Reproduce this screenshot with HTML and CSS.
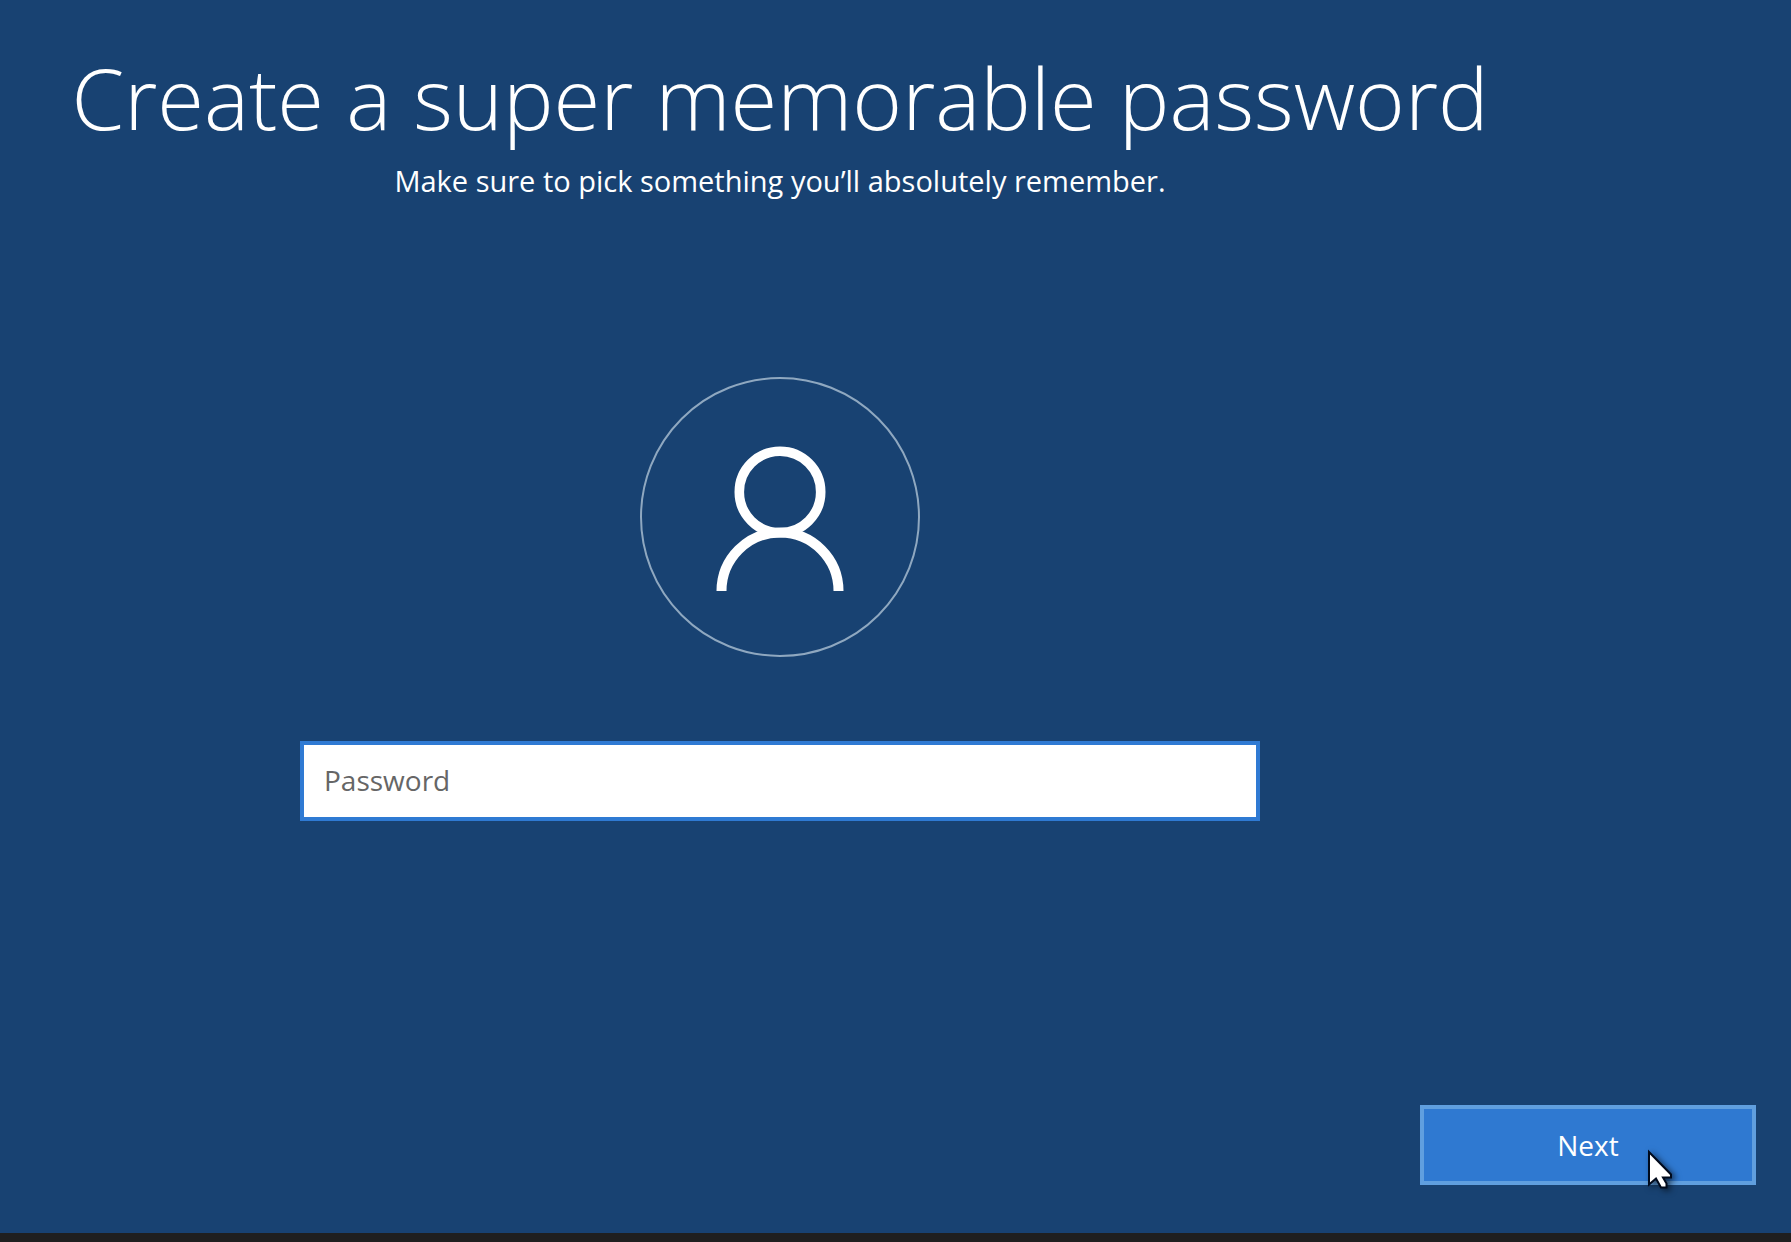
FILE: index.html
```html
<!DOCTYPE html>
<html lang="en">
<head>
<meta charset="utf-8">
<title>Create a super memorable password</title>
<link rel="stylesheet" href="styles.css">
</head>
<body>
<form class="setup">
  <main class="content">
    <h1 class="title">Create a super memorable password</h1>
    <p class="subtitle">Make sure to pick something you’ll absolutely remember.</p>
    <div class="avatar">
      <svg viewBox="0 0 280 280" fill="none" aria-hidden="true">
        <circle cx="140" cy="140" r="139" stroke="#8fa8c0" stroke-width="2"/>
        <circle cx="140" cy="115" r="40.7" stroke="#fff" stroke-width="9.6"/>
        <path d="M81.500 214c0-32 26-58.500 58.500-58.500s58.500 26.500 58.500 58.500" stroke="#fff" stroke-width="10"/>
      </svg>
    </div>
    <input class="password" type="password" placeholder="Password" aria-label="Password">
  </main>
  <footer class="actions">
    <button class="next" type="button">Next
      <svg class="cursor" viewBox="0 0 30 46" aria-hidden="true">
        <path d="M1 1V33.500L8 27.500L13 36.500H18.500V32.500L15 26.500H23V23.500Z" fill="#fff" stroke="#000a1c" stroke-width="2"/>
      </svg>
    </button>
  </footer>
</form>
</body>
</html>
```
FILE: styles.css
```css
* {
  box-sizing: border-box;
}

body {
  margin: 0;
  background: #184272;
  color: #fff;
  font-family: "Open Sans", "Noto Sans", sans-serif;
}

.setup {
  display: flex;
  flex-direction: column;
  min-height: 100vh;
  border-bottom: 9px solid #1f1f1f;
}

.content {
  display: flex;
  flex-direction: column;
  align-items: center;
  padding: 36px 231px 0 0;
}

.title {
  margin: 0;
  font-size: 85px;
  font-weight: 300;
  line-height: 122px;
  white-space: nowrap;
}

.subtitle {
  margin: 0;
  font-size: 29px;
  line-height: 46px;
}

.avatar {
  width: 280px;
  height: 280px;
  margin: 173px 0 84px;
}

.avatar svg {
  display: block;
}

.password {
  width: 100%;
  max-width: 960px;
  height: 80px;
  padding: 0 20px 2px;
  border: 4px solid #2f7ad3;
  border-radius: 0;
  outline: 0;
  background: #fff;
  color: #000;
  font: inherit;
  font-size: 28px;
}

.password::placeholder {
  color: #666;
  opacity: 1;
}

.actions {
  display: flex;
  justify-content: flex-end;
  margin-top: auto;
  padding: 48px 35px;
}

.next {
  position: relative;
  width: 336px;
  height: 80px;
  padding: 0;
  border: 4px solid #609fdf;
  background: #2f79d1;
  color: #fff;
  font: inherit;
  font-size: 28px;
}

.cursor {
  position: absolute;
  top: 42px;
  left: 224px;
  width: 30px;
  height: 46px;
  overflow: visible;
  filter: drop-shadow(3px 2px 3px rgba(0, 0, 0, 0.6));
}
```
